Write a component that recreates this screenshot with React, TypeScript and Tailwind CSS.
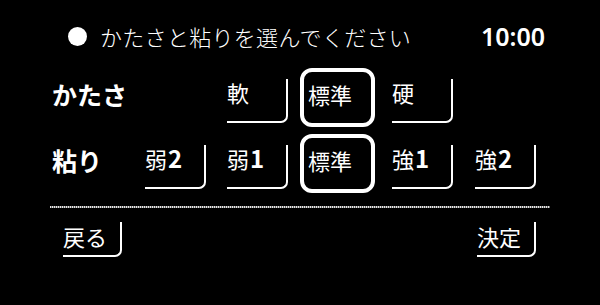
import React from "react";

const jp = "font-['Noto_Sans_CJK_JP','Noto_Sans',sans-serif]";

function Bracket({ children, className = "" }: { children?: React.ReactNode; className?: string }) {
  return (
    <div
      className={`w-[61px] h-[44px] mt-[11px] border-r-2 border-b-2 border-white rounded-br-[7px] text-[22px] leading-[26px] text-white whitespace-nowrap ${className}`}
    >
      {children}
    </div>
  );
}

function Selected({ children }: { children: React.ReactNode }) {
  return (
    <div className="w-[75px] h-[59px] border-4 border-white rounded-[12px] pl-[4px] pt-[9px] text-[22px] leading-[26px] text-white whitespace-nowrap">
      {children}
    </div>
  );
}

function Num({ k, n }: { k: string; n: string }) {
  return (
    <span className="flex items-start">
      <span>{k}</span>
      <span className="font-bold text-[24px] leading-[26px] ml-[1px]">{n}</span>
    </span>
  );
}

export default function App() {
  return (
    <div className={`w-[600px] h-[305px] bg-black text-white overflow-hidden ${jp}`}>
      <div className="px-[50px] flex flex-col">
        {/* header */}
        <div className="mt-[24px] h-[25px] flex items-center">
          <div className="ml-[18px] w-[19px] h-[19px] rounded-full bg-white" />
          <div className="ml-[13px] text-[22px] leading-[25px] tracking-[0.3px] font-light">かたさと粘りを選んでください</div>
          <div className="ml-auto mr-[5px] text-[25px] leading-[25px] font-semibold font-['Noto_Sans',sans-serif]">10:00</div>
        </div>

        {/* row 1 */}
        <div className="mt-[19px] h-[59px] flex items-start">
          <div className="ml-[2px] w-[93px] mt-[11px] text-[25px] leading-[30px] font-bold">かたさ</div>
          <div className="w-[61px]" />
          <Bracket className="ml-[21px]">軟</Bracket>
          <div className="ml-[12px]">
            <Selected>標準</Selected>
          </div>
          <Bracket className="ml-[17px]">硬</Bracket>
        </div>

        {/* row 2 */}
        <div className="mt-[7px] h-[59px] flex items-start">
          <div className="ml-[2px] w-[93px] mt-[11px] text-[25px] leading-[30px] font-bold">粘り</div>
          <Bracket><Num k="弱" n="2" /></Bracket>
          <Bracket className="ml-[21px]"><Num k="弱" n="1" /></Bracket>
          <div className="ml-[12px]">
            <Selected>標準</Selected>
          </div>
          <Bracket className="ml-[17px]"><Num k="強" n="1" /></Bracket>
          <Bracket className="ml-[22px]"><Num k="強" n="2" /></Bracket>
        </div>

        {/* divider */}
        <div className="mt-[13px] h-[2px] w-full bg-[repeating-linear-gradient(90deg,#e6e6e6_0px,#e6e6e6_1px,#6a6a6a_1px,#6a6a6a_2px)]" />

        {/* bottom */}
        <div className="mt-[14px] flex items-start">
          <div className="ml-[13px] w-[59px] h-[35px] border-r-2 border-b-2 border-white rounded-br-[7px] pt-[1px] text-[22px] leading-[26px]">戻る</div>
          <div className="ml-auto mr-[14px] w-[59px] h-[35px] border-r-2 border-b-2 border-white rounded-br-[7px] pt-[1px] text-[22px] leading-[26px]">決定</div>
        </div>
      </div>
    </div>
  );
}
